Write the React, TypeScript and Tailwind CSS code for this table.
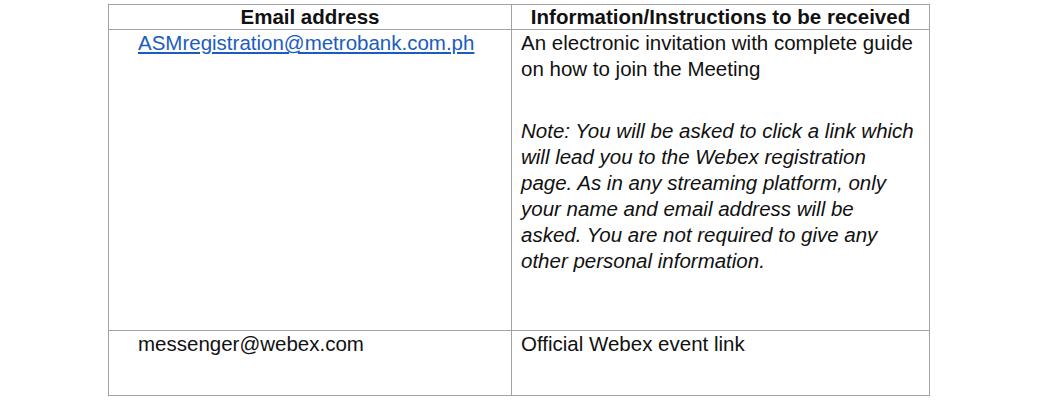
export default function App() {
  return (
    <div className="w-[1046px] h-[404px] bg-white pt-[4px] pl-[108px] font-['Liberation_Sans',Arial,sans-serif] text-[20.5px] text-[#111]">
      <table className="w-[821px] border-collapse table-fixed">
        <colgroup>
          <col className="w-[403px]" />
          <col className="w-[418px]" />
        </colgroup>
        <thead>
          <tr className="h-[25px]">
            <th className="border border-[#a3a3a3] font-bold leading-[22px] pb-[1px] text-center">Email address</th>
            <th className="border border-[#a3a3a3] font-bold leading-[22px] pb-[1px] text-center">Information/Instructions to be received</th>
          </tr>
        </thead>
        <tbody>
          <tr className="h-[301px]">
            <td className="border border-[#a3a3a3] align-top pl-[29px] leading-[26px]">
              <a href="#" className="text-[#1c5cbf] underline underline-offset-2">ASMregistration@metrobank.com.ph</a>
            </td>
            <td className="border border-[#a3a3a3] align-top pl-[9px] pr-[12px] leading-[26px]">
              <p>An electronic invitation with complete guide on how to join the Meeting</p>
              <p className="mt-[36px] italic">
                Note: You will be asked to click a link which will lead you to the Webex registration page. As in any streaming platform, only your name and email address will be asked. You are not required to give any other personal information.
              </p>
            </td>
          </tr>
          <tr className="h-[65px]">
            <td className="border border-[#a3a3a3] align-top pl-[29px] leading-[26px]">messenger@webex.com</td>
            <td className="border border-[#a3a3a3] align-top pl-[9px] leading-[26px]">Official Webex event link</td>
          </tr>
        </tbody>
      </table>
    </div>
  );
}
